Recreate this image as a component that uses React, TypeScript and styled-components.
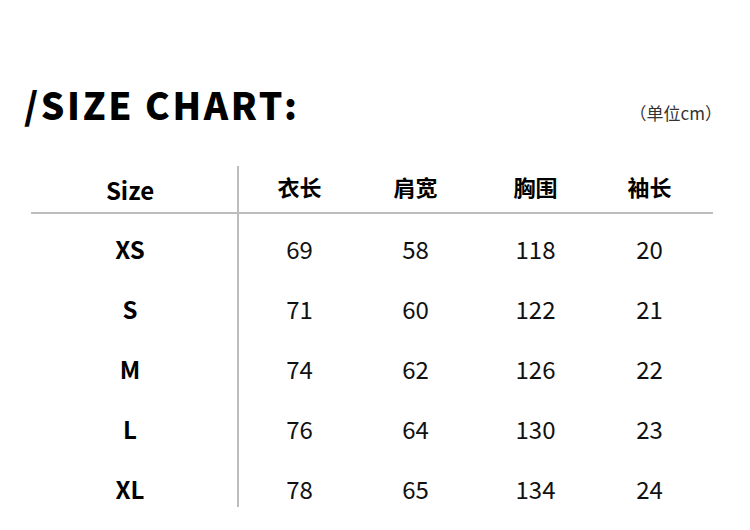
import React from 'react';
import styled, { createGlobalStyle } from 'styled-components';

const GlobalStyle = createGlobalStyle`
  html, body {
    margin: 0;
    padding: 0;
    background: #ffffff;
  }
  body {
    font-family: "Noto Sans CJK SC", "Noto Sans", sans-serif;
    color: #111;
  }
`;

const rows = [
  { size: 'XS', values: ['69', '58', '118', '20'] },
  { size: 'S', values: ['71', '60', '122', '21'] },
  { size: 'M', values: ['74', '62', '126', '22'] },
  { size: 'L', values: ['76', '64', '130', '23'] },
  { size: 'XL', values: ['78', '65', '134', '24'] },
];

const headers = ['衣长', '肩宽', '胸围', '袖长'];

const App = () => {
  return (
    <Page>
      <GlobalStyle />
      <TitleBar>
        <Title>/SIZE CHART:</Title>
        <Unit>（单位cm）</Unit>
      </TitleBar>

      <Table>
        <HeaderRow>
          <SizeCell $header>Size</SizeCell>
          {headers.map((h) => (
            <HeaderCell key={h}>{h}</HeaderCell>
          ))}
          <span />
        </HeaderRow>
        {rows.map((r) => (
          <BodyRow key={r.size}>
            <SizeCell>{r.size}</SizeCell>
            {r.values.map((v, i) => (
              <ValueCell key={i}>{v}</ValueCell>
            ))}
            <span />
          </BodyRow>
        ))}
      </Table>
    </Page>
  );
};

export default App;

// Styled Components
const Page = styled.div`
  width: 750px;
  height: 530px;
  padding-top: 86px;
  box-sizing: border-box;
  overflow: hidden;
`;

const TitleBar = styled.div`
  display: flex;
  justify-content: space-between;
  align-items: baseline;
  padding: 0 28px 0 24px;
`;

const Title = styled.h1`
  margin: 0;
  font-size: 37px;
  line-height: 36px;
  font-weight: 900;
  color: #000;
  letter-spacing: 2.6px;
`;

const Unit = styled.span`
  font-size: 17px;
  color: #333;
`;

const Table = styled.div`
  margin: 41px 37px 0 31px;
`;

const columns = '208px 121px 111px 129px 99px 1fr';

const HeaderRow = styled.div`
  display: grid;
  grid-template-columns: ${columns};
  grid-template-rows: 46px;
  height: 48px;
  box-sizing: border-box;
  border-bottom: 2px solid #bdbdbd;
`;

const BodyRow = styled.div`
  display: grid;
  grid-template-columns: ${columns};
  grid-template-rows: 60px;

  &:last-child {
    grid-template-rows: 53px;
  }
`;

const SizeCell = styled.div<{ $header?: boolean }>`
  box-sizing: border-box;
  border-right: 2px solid #bdbdbd;
  padding-right: 8px;
  text-align: center;
  font-weight: 700;
  font-size: 24px;
  color: #000;
  padding-top: ${(p) => (p.$header ? '0' : '10px')};
  line-height: ${(p) => (p.$header ? '48px' : '50px')};
`;

const HeaderCell = styled.div`
  text-align: center;
  font-weight: 700;
  font-size: 22px;
  line-height: 40px;
  color: #000;
`;

const ValueCell = styled.div`
  text-align: center;
  font-size: 24px;
  font-weight: 400;
  padding-top: 10px;
  line-height: 50px;
  color: #111;
`;
